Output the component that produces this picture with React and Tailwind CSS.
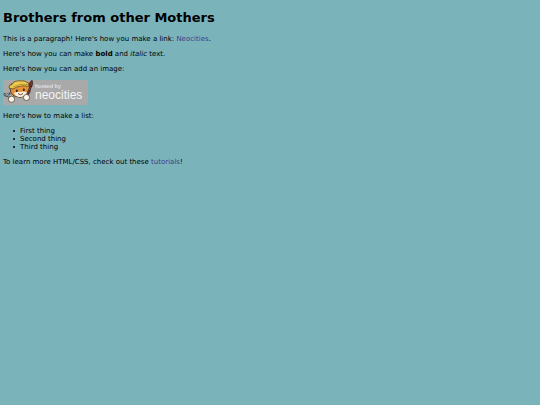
import React from 'react';

const listItems = ['First thing', 'Second thing', 'Third thing'];

const NeocitiesBadge = () => (
  <svg
    viewBox="0 0 85 25"
    className="block w-[85px] h-[25px]"
    role="img"
    aria-label="Hosted by Neocities"
  >
    <rect x="0" y="0" width="85" height="25" rx="2" fill="#a9a9a9" />

    {/* fork */}
    <g fill="none" strokeLinecap="round">
      <path d="M3.5 14 L8 19 M1.5 14 Q3 17.5 6.5 13.5" stroke="#3d4a4e" strokeWidth="2.2" />
      <path d="M3 13 L8 19 M1.5 14 Q3 17 6 13.5" stroke="#c3ced0" strokeWidth="0.8" />
    </g>

    {/* cat */}
    <path
      d="M7 8 L8 4 L25 3 L27 9 Q28 14 23 16 Q17 18.5 11 16 Q7 13.5 7 8 Z"
      fill="#e5923a"
      stroke="#4b3b26"
      strokeWidth="0.9"
    />
    <path d="M11 13 Q14 11 17 12 Q22 10.5 25 13 Q21 17.5 16 17 Q12 16.5 11 13 Z" fill="#f7efdf" />
    <path
      d="M6 8 Q5.5 4.5 9 4.5 Q10 1 15 0.8 Q22 0 25.5 3 L26 6.5 Q17 4.5 10 9 Z"
      fill="#eec94f"
      stroke="#5e4c22"
      strokeWidth="0.8"
    />
    <path d="M10 7 Q17 3 25 4.5" fill="none" stroke="#a9822c" strokeWidth="0.7" />
    <ellipse cx="13.8" cy="10.8" rx="1" ry="1.4" fill="#30261c" />
    <ellipse cx="20.8" cy="9.8" rx="1" ry="1.4" fill="#30261c" />
    <path d="M15 13.5 Q17.5 16 20 13.5" fill="none" stroke="#6a3327" strokeWidth="0.9" />

    {/* brush */}
    <path d="M28 6 L24.5 14" stroke="#2b2b2d" strokeWidth="2.2" strokeLinecap="round" />
    <path d="M27.5 7 L24.5 14" stroke="#b4443b" strokeWidth="0.8" strokeLinecap="round" />
    <path d="M26.5 5.5 Q26 2 29 0.3 Q30.5 3.5 28.8 6.5 Z" fill="#8e2f2d" stroke="#2b2425" strokeWidth="0.8" />

    {/* paws */}
    <circle cx="8.5" cy="19.3" r="3.1" fill="#fbf6e9" stroke="#57483a" strokeWidth="0.8" />
    <circle cx="23.5" cy="17.5" r="3.1" fill="#fbf6e9" stroke="#57483a" strokeWidth="0.8" />

    <text x="32" y="8" fontSize="6" fill="#ededed" fontFamily="'Liberation Sans', sans-serif">
      hosted by
    </text>
    <text x="32" y="19" fontSize="12" fill="#f5f5f5" fontFamily="'Liberation Sans', sans-serif">
      neocities
    </text>
  </svg>
);

const App = () => {
  return (
    <main className="min-h-screen bg-[#7bb3bb] px-[3px] pt-[9px] pb-2 font-['DejaVu_Sans',sans-serif] text-[7px] leading-[8px] text-black">
      <h1 className="text-[13px] leading-[17px] font-bold mb-[9px]">Brothers from other Mothers</h1>

      <div className="flex flex-col gap-[7px]">
        <p>
          This is a paragraph! Here's how you make a link:{' '}
          <a href="#neocities" className="text-[#403d8c]">Neocities</a>.
        </p>

        <p>
          Here's how you can make <strong className="font-bold">bold</strong> and <em>italic</em> text.
        </p>

        <p>Here's how you can add an image:</p>

        <NeocitiesBadge />

        <p>Here's how to make a list:</p>

        <ul className="pl-[10px]">
          {listItems.map(item => (
            <li key={item} className="flex items-center gap-[5px]">
              <span className="size-[2px] rounded-full bg-black" />
              {item}
            </li>
          ))}
        </ul>

        <p>
          To learn more HTML/CSS, check out these{' '}
          <a href="#tutorials" className="text-[#403d8c]">tutorials</a>!
        </p>
      </div>
    </main>
  );
};

export default App;
